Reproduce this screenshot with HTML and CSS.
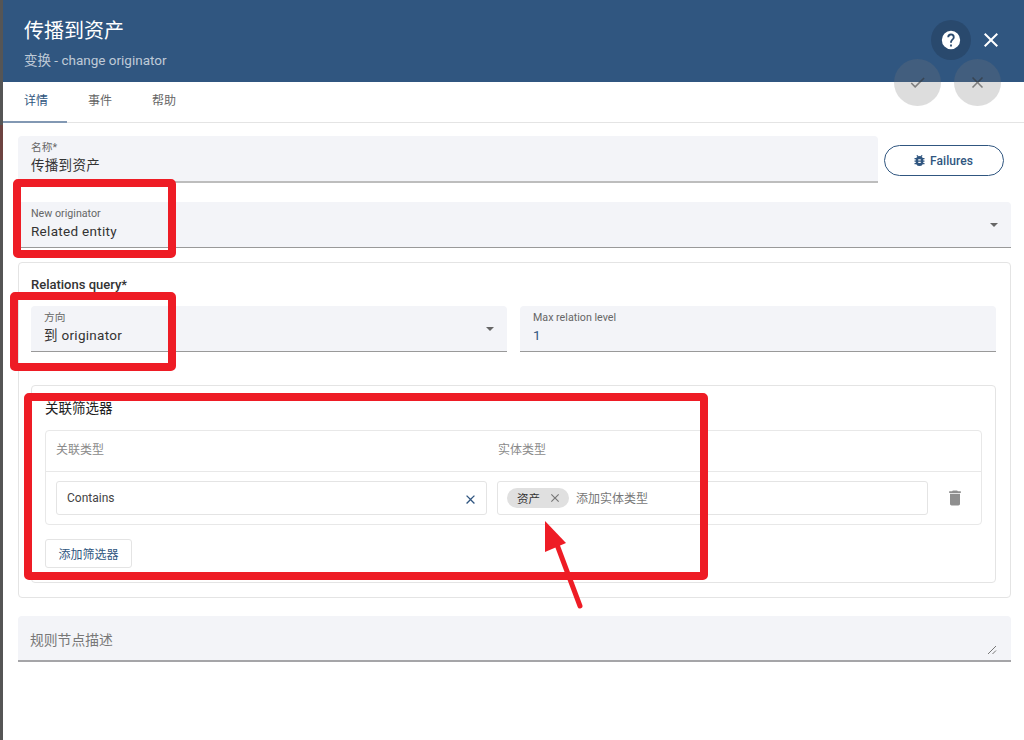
FILE: index.html
```html
<!DOCTYPE html>
<html lang="zh">
<head>
<meta charset="utf-8">
<title>传播到资产</title>
<link rel="stylesheet" href="styles.css">
</head>
<body>
<div class="backdrop"><span class="backdrop-mark"></span></div>
<main class="panel">
  <header class="head">
    <h1 class="head-title">传播到资产</h1>
    <p class="head-sub">变换 - change originator</p>
  </header>
  <nav class="tabs">
    <span class="tab tab-active">详情</span>
    <span class="tab">事件</span>
    <span class="tab">帮助</span>
  </nav>
  <section class="form">
    <div class="row-name">
      <div class="field field-name">
        <span class="label">名称*</span>
        <span class="value">传播到资产</span>
      </div>
      <button class="failures">
        <svg class="bug" viewBox="0 0 24 24"><path d="M20 8h-2.81a6 6 0 0 0-1.82-1.96L17 4.41 15.59 3l-2.17 2.17a6 6 0 0 0-2.83 0L8.41 3 7 4.41l1.62 1.63A6 6 0 0 0 6.81 8H4v2h2.09c-.05.33-.09.66-.09 1v1H4v2h2v1c0 .34.04.67.09 1H4v2h2.81a6 6 0 0 0 10.38 0H20v-2h-2.09c.05-.33.09-.66.09-1v-1h2v-2h-2v-1c0-.34-.04-.67-.09-1H20V8zm-6 8h-4v-2h4v2zm0-4h-4v-2h4v2z"/></svg>
        Failures
      </button>
    </div>
    <div class="field field-select field-originator">
      <span class="label">New originator</span>
      <span class="value">Related entity</span>
      <i class="caret"></i>
    </div>
    <div class="box box-query">
      <div class="box-title">Relations query*</div>
      <div class="row-two">
        <div class="field field-select">
          <span class="label">方向</span>
          <span class="value">到 originator</span>
          <i class="caret"></i>
        </div>
        <div class="field">
          <span class="label">Max relation level</span>
          <span class="value value-blue">1</span>
        </div>
      </div>
      <div class="box box-filter">
        <div class="filter-title">关联筛选器</div>
        <div class="table">
          <div class="table-head">
            <span class="col-a">关联类型</span>
            <span class="col-b">实体类型</span>
          </div>
          <div class="table-row">
            <div class="input input-a">
              <span>Contains</span>
              <svg class="x-blue" viewBox="0 0 24 24"><path d="M19 6.41 17.59 5 12 10.59 6.41 5 5 6.41 10.59 12 5 17.59 6.41 19 12 13.41 17.59 19 19 17.59 13.41 12z"/></svg>
            </div>
            <div class="input input-b">
              <span class="chip">资产
                <svg class="x-gray" viewBox="0 0 24 24"><path d="M19 6.41 17.59 5 12 10.59 6.41 5 5 6.41 10.59 12 5 17.59 6.41 19 12 13.41 17.59 19 19 17.59 13.41 12z"/></svg>
              </span>
              <span class="placeholder">添加实体类型</span>
            </div>
            <svg class="trash" viewBox="0 0 24 24"><path d="M6 19c0 1.1.9 2 2 2h8c1.1 0 2-.9 2-2V7H6v12zM19 4h-3.5l-1-1h-5l-1 1H5v2h14V4z"/></svg>
          </div>
        </div>
        <button class="add-filter">添加筛选器</button>
      </div>
    </div>
    <div class="field field-desc">
      <span class="desc-text">规则节点描述</span>
      <svg class="resize" viewBox="0 0 10 10"><path d="M1 9 9 1M5.5 9 9 5.5"/></svg>
    </div>
  </section>
</main>

<button class="round round-help"><svg viewBox="0 0 24 24"><path d="M12 2a10 10 0 1 0 0 20 10 10 0 0 0 0-20zm1 17h-2v-2h2v2zm2.07-7.75-.9.92C13.45 12.9 13 13.5 13 15h-2v-.5c0-1.1.45-2.1 1.17-2.83l1.24-1.26A2 2 0 1 0 10 9H8a4 4 0 1 1 8 0c0 .88-.36 1.68-.93 2.25z"/></svg></button>
<button class="plain-close"><svg viewBox="0 0 24 24"><path d="M19 6.41 17.59 5 12 10.59 6.41 5 5 6.41 10.59 12 5 17.59 6.41 19 12 13.41 17.59 19 19 17.59 13.41 12z"/></svg></button>
<button class="round round-fab fab-check"><svg viewBox="0 0 24 24"><path d="M9 16.17 4.83 12l-1.42 1.41L9 19 21 7l-1.41-1.41z"/></svg></button>
<button class="round round-fab fab-cancel"><svg viewBox="0 0 24 24"><path d="M19 6.41 17.59 5 12 10.59 6.41 5 5 6.41 10.59 12 5 17.59 6.41 19 12 13.41 17.59 19 19 17.59 13.41 12z"/></svg></button>

<svg class="notes" viewBox="0 0 1024 740">
  <rect class="note-box" x="17" y="183" width="155" height="71" rx="1"/>
  <rect class="note-box" x="14" y="296" width="158" height="71" rx="1"/>
  <rect class="note-box" x="28" y="397" width="676" height="179" rx="1"/>
  <path class="note-line" d="M580 606 556 542"/>
  <path class="note-head" d="M545 521 566 543 545 552z"/>
</svg>
</body>
</html>
```
FILE: styles.css
```css
* { box-sizing: border-box; }
html, body { margin: 0; height: 740px; overflow: hidden; }
body {
  display: flex;
  background: #fff;
  font-family: Roboto, "Noto Sans CJK SC", sans-serif;
  color: #212121;
  position: relative;
}
.backdrop { width: 3px; flex: none; background: #555; padding-top: 125px; }
.backdrop-mark { display: block; height: 35px; background: #6d4340; }
.panel { flex: 1; min-width: 0; display: flex; flex-direction: column; }
.head {
  height: 82px;
  background: #305680;
  color: #fff;
  padding: 18px 21px 0;
  flex: none;
}
.head-title { margin: 0; font-size: 20px; line-height: 26px; font-weight: 400; }
.head-sub { margin: 6px 0 0; font-size: 13.5px; line-height: 20px; font-weight: 400; color: rgba(255,255,255,.7); }
.tabs { display: flex; height: 41px; border-bottom: 1px solid #e4e4e4; flex: none; }
.tab {
  width: 64px;
  padding-left: 2px;
  text-align: center;
  font-size: 12px;
  line-height: 39px;
  color: #666;
  height: 41px;
}
.tab-active { color: #305680; border-bottom: 2px solid #8298b3; }
.form { padding: 13px 13px 0 15px; display: flex; flex-direction: column; }
.row-name { display: flex; gap: 6px; padding-right: 7px; align-items: flex-start; }
.field {
  position: relative;
  height: 46px;
  background: #f3f4f8;
  border-bottom: 1px solid #999;
  border-radius: 4px 4px 0 0;
  padding: 5px 13px 0;
  display: flex;
  flex-direction: column;
  flex: 1;
  min-width: 0;
}
.field-name { height: 47px; border-bottom: 2px solid #bdbdbd; }
.label { font-size: 10.7px; line-height: 13px; color: #666; }
.value { font-size: 13.5px; line-height: 19px; margin-top: 2px; letter-spacing: .3px; color: #333; }
.value-blue { color: #305680; }
.caret {
  position: absolute;
  right: 13px;
  top: 21px;
  border: 4.5px solid transparent;
  border-top: 4.5px solid #666;
  border-bottom: 0;
  width: 0;
}
.failures {
  flex: none;
  width: 120px;
  height: 31px;
  margin-top: 9px;
  border: 1px solid #305680;
  border-radius: 16px;
  background: #fff;
  color: #305680;
  font: 500 12px Roboto, sans-serif;
  letter-spacing: .1px;
  display: flex;
  align-items: center;
  justify-content: center;
  gap: 3px;
  padding: 0 3px 0 0;
}
.bug { width: 15px; height: 15px; fill: #305680; }
.field-originator { margin-top: 19px; flex: none; width: 993px; }
.box { border: 1px solid #e4e4e4; border-radius: 4px; }
.box-query { margin-top: 14px; width: 993px; height: 336px; padding: 13px 14px 0 12px; flex: none; }
.box-title { font-size: 13px; line-height: 17px; font-weight: 500; color: #333; }
.row-two { display: flex; gap: 13px; margin-top: 13px; }
.box-filter { margin-top: 33px; height: 198px; padding: 14px 13px 0 13px; }
.filter-title { font-size: 13.5px; line-height: 17px; font-weight: 400; }
.table { margin-top: 13px; height: 95px; border: 1px solid #e8e8e8; border-radius: 4px; }
.table-head {
  height: 41px;
  border-bottom: 1px solid #e8e8e8;
  display: flex;
  align-items: center;
  font-size: 12px;
  color: #8a8a8a;
  padding: 0 0 5px 10px;
}
.col-a { width: 442px; }
.table-row { display: flex; align-items: flex-start; padding: 9px 0 0 10px; gap: 10px; }
.input {
  height: 34px;
  border: 1px solid #e4e4e4;
  border-radius: 3px;
  display: flex;
  align-items: center;
  font-size: 12px;
  color: #444;
}
.input-a { width: 431px; padding: 0 8px 0 10px; justify-content: space-between; }
.x-blue { width: 15px; height: 15px; fill: #305680; margin-top: 2px; }
.input-b { width: 431px; padding: 0 0 0 9px; gap: 7px; }
.chip {
  display: flex;
  align-items: center;
  height: 20px;
  width: 62px;
  padding-left: 10px;
  gap: 8px;
  border-radius: 10px;
  background: #e0e0e0;
  color: #333;
  font-size: 11.5px;
}
.x-gray { width: 14px; height: 14px; fill: #777; }
.placeholder { color: #777; font-size: 12px; margin-top: -2px; }
.trash { width: 20px; height: 20px; fill: #8f8f8f; margin: 7px 0 0 7px; }
.add-filter {
  display: block;
  margin-top: 14px;
  width: 87px;
  height: 29px;
  border: 1px solid #e4e4e4;
  border-radius: 3px;
  background: #fff;
  color: #305680;
  font: 12px Roboto, "Noto Sans CJK SC", sans-serif;
  padding: 0;
}
.field-desc {
  margin-top: 18px;
  flex: none;
  width: 993px;
  height: 46px;
  padding: 1px 12px 0;
  justify-content: center;
  border-bottom: 2px solid #a5a5a8;
}
.desc-text { font-size: 13.8px; color: #777; }
.resize { position: absolute; right: 14px; bottom: 5px; width: 10px; height: 10px; }
.resize path { stroke: #777; stroke-width: 1; fill: none; }
.round, .plain-close {
  position: absolute;
  border: 0;
  padding: 0;
  display: flex;
  align-items: center;
  justify-content: center;
}
.round { border-radius: 50%; }
.round-help { left: 931px; top: 20px; width: 40px; height: 40px; background: #29496d; }
.round-help svg { width: 22px; height: 22px; fill: #fff; }
.plain-close { left: 979px; top: 28px; width: 24px; height: 24px; background: none; }
.plain-close svg { width: 24px; height: 24px; fill: #fff; }
.round-fab { top: 59px; width: 47px; height: 47px; background: rgba(120,120,120,.25); }
.round-fab svg { width: 19px; height: 19px; fill: rgba(50,50,50,.55); }
.fab-check { left: 894px; }
.fab-cancel { left: 954px; }
.notes { position: absolute; left: 0; top: 0; width: 1024px; height: 740px; pointer-events: none; }
.note-box { fill: none; stroke: #ee1c25; stroke-width: 8; }
.note-line { stroke: #ee1c25; stroke-width: 5; stroke-linecap: round; fill: none; }
.note-head { fill: #ee1c25; }
```
